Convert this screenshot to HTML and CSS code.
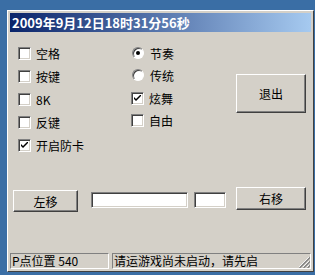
FILE: index.html
```html
<!DOCTYPE html>
<html lang="zh">
<head>
  <meta charset="UTF-8">
  <title>2009年9月12日18时31分56秒</title>
  <link rel="stylesheet" href="styles.css">
</head>
<body>
  <div class="window">
    <div class="titlebar">2009年9月12日18时31分56秒</div>

    <div class="options">
      <div class="col col-left">
        <label class="opt"><span class="box"></span>空格</label>
        <label class="opt"><span class="box"></span>按键</label>
        <label class="opt"><span class="box"></span>8K</label>
        <label class="opt"><span class="box"></span>反键</label>
        <label class="opt"><span class="box"><svg viewBox="0 0 7 7" width="7" height="7"><path d="M0 2 L0 4 L2 6 L7 1 L7 -1 L2 4 Z" fill="#000"/></svg></span>开启防卡</label>
      </div>
      <div class="col col-right">
        <label class="opt"><span class="radio on"></span>节奏</label>
        <label class="opt"><span class="radio"></span>传统</label>
        <label class="opt shift"><span class="box"><svg viewBox="0 0 7 7" width="7" height="7"><path d="M0 2 L0 4 L2 6 L7 1 L7 -1 L2 4 Z" fill="#000"/></svg></span>炫舞</label>
        <label class="opt"><span class="box"></span>自由</label>
      </div>
      <button class="btn btn-exit">退出</button>
    </div>

    <div class="move-row">
      <button class="btn btn-left">左移</button>
      <span class="edit edit-long"></span>
      <span class="edit edit-short"></span>
      <button class="btn btn-right">右移</button>
    </div>

    <div class="statusbar">
      <div class="panel panel-pos">P点位置 540</div>
      <div class="panel panel-msg">请运游戏尚未启动，请先启
        <svg class="grip" viewBox="0 0 12 12" width="12" height="12">
          <path d="M11 1 L1 11 M11 5 L5 11 M11 9 L9 11" stroke="#fff" stroke-width="1"/>
          <path d="M12 1 L1 12 M12 5 L5 12 M12 9 L9 12" stroke="#808080" stroke-width="1.4" transform="translate(0.6 0)"/>
        </svg>
      </div>
    </div>
  </div>
</body>
</html>
```

FILE: styles.css
```css
body {
  margin: 0;
  padding: 10px 0 0 7px;
  background-color: #3a6ea5;
  font-family: "Noto Sans CJK SC", "DejaVu Sans", sans-serif;
  font-size: 12px;
  color: #000;
  overflow: hidden;
}

.window {
  box-sizing: border-box;
  width: 307px;
  height: 262px;
  padding: 2px;
  background-color: #d4d0c8;
  border: 1px solid;
  border-color: #ffffff #404040 #404040 #ffffff;
  display: flex;
  flex-direction: column;
}

.titlebar {
  height: 19px;
  line-height: 19px;
  padding-left: 2px;
  color: #fff;
  font-weight: bold;
  font-size: 13px;
  background: linear-gradient(to right, #0a246a, #a6caf0);
  white-space: nowrap;
}

.options {
  display: flex;
  align-items: flex-start;
  padding: 10px 5px 0 8px;
}

.col {
  display: flex;
  flex-direction: column;
}

.col-left {
  width: 113px;
}

.col-left .opt {
  height: 23px;
}

.col-right .opt {
  height: 22px;
}

.col-right .shift {
  margin-top: 1px;
}

.opt {
  display: flex;
  align-items: center;
  gap: 5px;
  white-space: nowrap;
}

.box {
  box-sizing: border-box;
  width: 13px;
  height: 13px;
  background: #fff;
  border: 1px solid;
  border-color: #808080 #fff #fff #808080;
  box-shadow: inset 1px 1px #404040, inset -1px -1px #d4d0c8;
  display: flex;
  align-items: center;
  justify-content: center;
  flex-shrink: 0;
}

.box svg {
  display: block;
}

.radio {
  box-sizing: border-box;
  width: 12px;
  height: 12px;
  margin: 0 1px 0 1px;
  border-radius: 50%;
  background: #fff;
  border: 1px solid;
  border-color: #808080 #fff #fff #808080;
  box-shadow: inset 1px 1px #404040;
  display: flex;
  align-items: center;
  justify-content: center;
  flex-shrink: 0;
}

.radio.on::after {
  content: "";
  width: 4px;
  height: 4px;
  border-radius: 50%;
  background: #000;
}

.btn {
  box-sizing: border-box;
  font-family: inherit;
  font-size: 12px;
  color: #000;
  background: #d4d0c8;
  border: 1px solid;
  border-color: #fff #404040 #404040 #fff;
  box-shadow: inset -1px -1px #808080;
  padding: 0;
}

.btn-exit {
  margin: 32px 0 0 auto;
  width: 70px;
  height: 39px;
}

.move-row {
  display: flex;
  align-items: flex-start;
  margin-top: 30px;
  padding-left: 3px;
}

.btn-left {
  width: 65px;
  height: 22px;
  margin-top: 3px;
}

.edit {
  box-sizing: border-box;
  height: 16px;
  margin-top: 5px;
  background: #fff;
  border: 1px solid;
  border-color: #808080 #fff #fff #808080;
  box-shadow: inset 1px 1px #404040, inset -1px -1px #d4d0c8;
}

.edit-long {
  width: 97px;
  margin-left: 13px;
}

.edit-short {
  width: 32px;
  margin-left: 6px;
}

.btn-right {
  width: 70px;
  height: 23px;
  margin-left: 10px;
}

.statusbar {
  margin-top: auto;
  display: flex;
  gap: 3px;
  height: 16px;
}

.panel {
  box-sizing: border-box;
  height: 16px;
  line-height: 14px;
  padding-left: 1px;
  border: 1px solid;
  border-color: #808080 #fff #fff #808080;
  white-space: nowrap;
  overflow: hidden;
}

.panel-pos {
  width: 99px;
}

.panel-msg {
  flex: 1;
  position: relative;
}

.grip {
  position: absolute;
  right: 0;
  bottom: 0;
}
```
